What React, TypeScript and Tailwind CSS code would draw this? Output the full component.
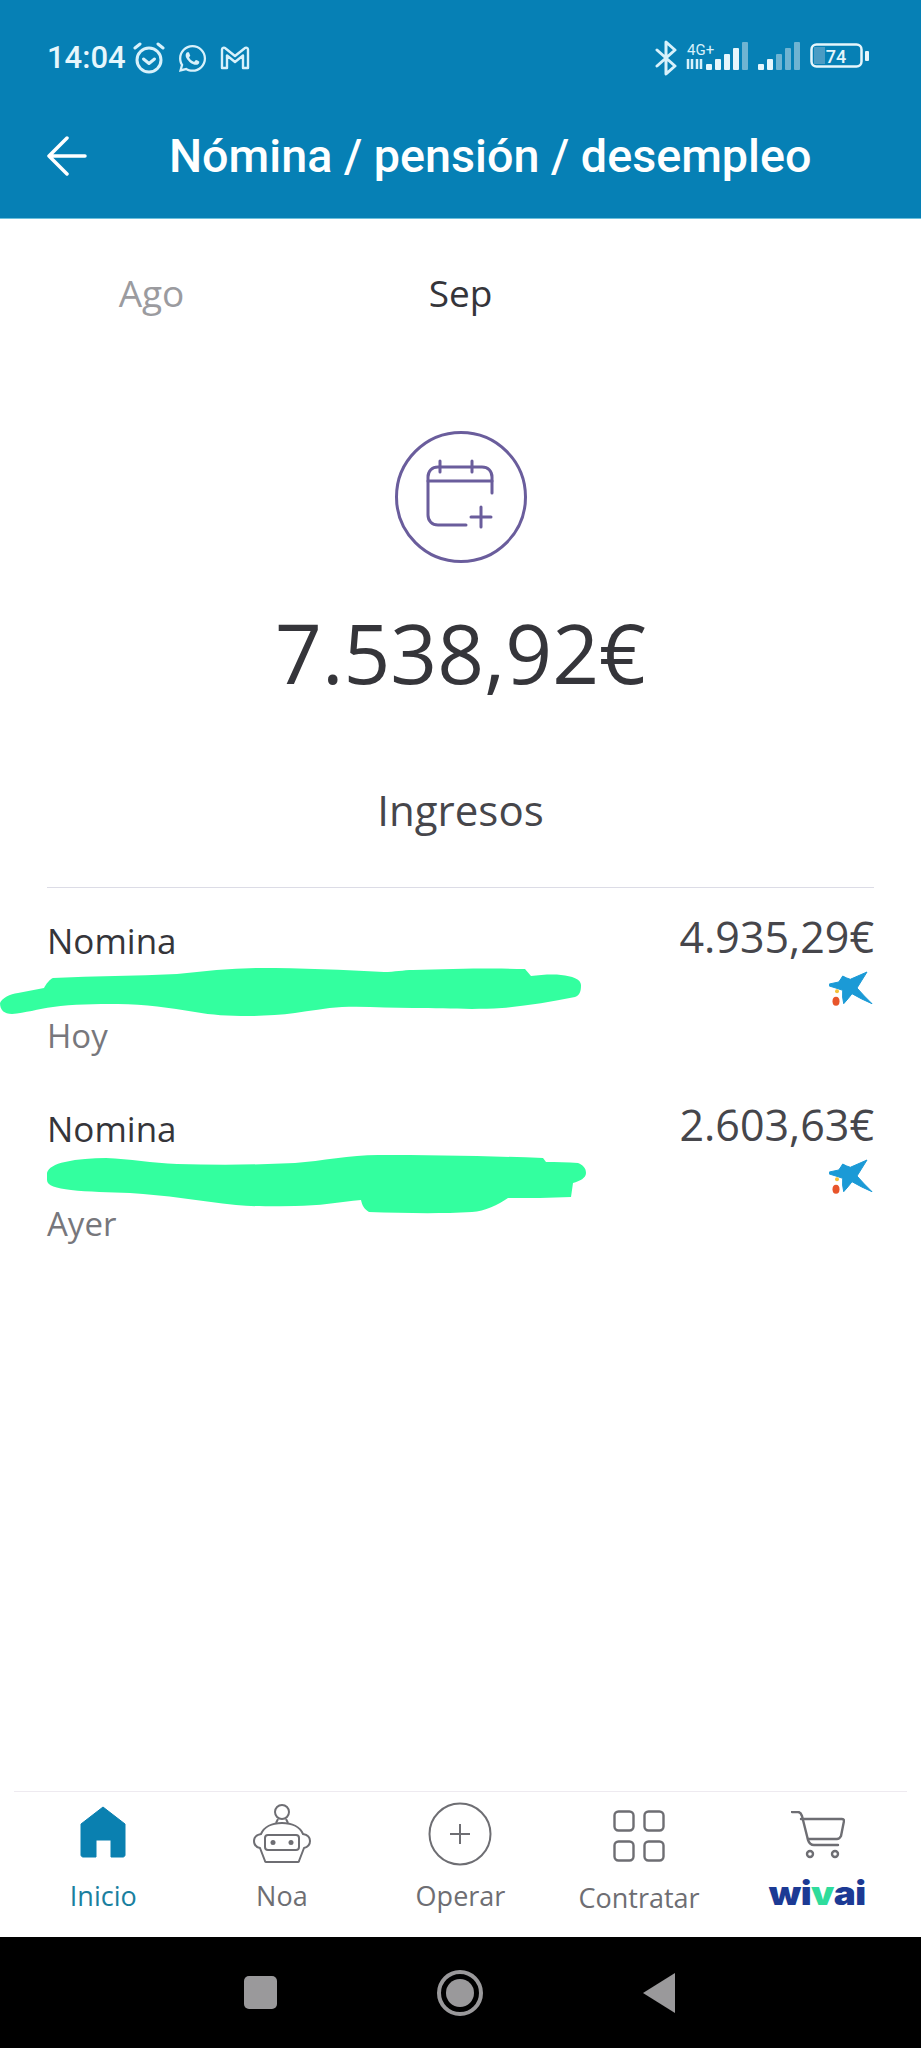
import type { ReactNode } from 'react';
import { FaWhatsapp } from 'react-icons/fa';

function AlarmIcon() {
  return (
    <svg width="34" height="32" viewBox="0 0 34 32" fill="none" stroke="#d8f1fb" strokeWidth="3" strokeLinecap="round" strokeLinejoin="round">
      <circle cx="17" cy="18" r="12" />
      <path d="M11.5 17l5.5 4.5 5.5-4.5" />
      <path d="M3 6l5-4M31 6l-5-4" />
    </svg>
  );
}

function GmailIcon() {
  return (
    <svg width="30" height="24" viewBox="0 0 30 24" fill="none" stroke="#d8f1fb" strokeWidth="2.4" strokeLinejoin="round">
      <path d="M2 3.5C2 1.8 4 1 5.3 2.2L15 10l9.7-7.8C26 1 28 1.800 28 3.500V22h-5V9.500L15 16 7 9.500V22H2z" />
    </svg>
  );
}

function StatusRight() {
  return (
    <svg width="216" height="36" viewBox="0 0 216 36" fill="none">
      {/* bluetooth */}
      <path d="M3 10l18 16-9 8V2l9 8L3 26" stroke="#d8f1fb" strokeWidth="3" strokeLinejoin="round" strokeLinecap="round" />
      {/* 4G+ */}
      <text x="33" y="15" fontFamily="Roboto, sans-serif" fontSize="15" fill="#d8f1fb">4G+</text>
      <path d="M34 19v10M38 19v10M43 19v10M47 19v10" stroke="#d8f1fb" strokeWidth="2.500" />
      {/* first signal */}
      <rect x="52" y="24" width="6" height="6" rx="1" fill="#e6f6fc" />
      <rect x="61" y="19" width="6" height="11" rx="1" fill="#e6f6fc" />
      <rect x="70" y="14" width="6" height="16" rx="1" fill="#e6f6fc" />
      <rect x="79" y="8" width="6" height="22" rx="1" fill="#e6f6fc" />
      <rect x="88" y="2" width="6" height="28" rx="1" fill="#6fb4d2" />
      {/* second signal */}
      <rect x="104" y="24" width="6" height="6" rx="1" fill="#e6f6fc" />
      <rect x="113" y="19" width="6" height="11" rx="1" fill="#e6f6fc" />
      <rect x="122" y="14" width="6" height="16" rx="1" fill="#6fb4d2" />
      <rect x="131" y="8" width="6" height="22" rx="1" fill="#6fb4d2" />
      <rect x="140" y="2" width="6" height="28" rx="1" fill="#6fb4d2" />
      {/* battery */}
      <rect x="160" y="7" width="11" height="17" fill="#4a9cc4" />
      <rect x="157.500" y="4.500" width="50" height="22" rx="5" stroke="#e6f6fc" strokeWidth="2.500" />
      <text x="182" y="23" textAnchor="middle" fontFamily="Roboto, sans-serif" fontWeight="500" fontSize="18" fill="#e6f6fc">74</text>
      <rect x="211" y="11" width="4" height="10" rx="1" fill="#e6f6fc" />
    </svg>
  );
}

function CalendarPlus() {
  return (
    <svg width="132" height="132" viewBox="0 0 132 132" fill="none" stroke="#6a5d9c" strokeWidth="3" strokeLinecap="round">
      <circle cx="66" cy="66" r="64.500" />
      <path d="M97 62V46c0-6-4-10-10-10H43c-6 0-10 4-10 10v38c0 6 4 10 10 10h28" />
      <path d="M33 50h64M45 30v11M77 30v11" />
      <path d="M76 86h20M86 76v20" />
    </svg>
  );
}

function CaixaStar() {
  return (
    <svg width="44" height="38" viewBox="0 0 44 38" className="mr-[1px]">
      <path d="M0.300 14L9.700 12Q12 9 13.700 6Q17 8 21.300 9.300L38 2Q33 10 28 18Q35 26 43 33.700Q32 29 23 23.700Q19 29 14.700 33.700Q13 27 13.700 20.300Q7 18 0.300 16Z" fill="#1b9ad6" stroke="#1b9ad6" strokeWidth="1" strokeLinejoin="round" />
      <circle cx="8" cy="21.300" r="2" fill="#f4c23a" />
      <ellipse cx="7" cy="31.300" rx="3.500" ry="4.500" fill="#e8552b" />
    </svg>
  );
}

function BlobOne() {
  return (
    <svg className="absolute left-0 top-[968px]" width="582" height="48" viewBox="0 968 582 48">
      <path d="M0 1003C2 998 10 994 18 993L44 988C46 984 50 979 53 978C95 976 135 976 177 974C205 971 232 968 260 968C300 968 345 970 384 972C395 972 403 970 413 970C450 969 490 968 525 969L531 976C540 975 552 974 561 975C572 976 581 979 581 985C581 991 580 995 575 997C550 1002 525 1006 502 1008C470 1010 445 1008 413 1008C390 1008 365 1006 342 1007C325 1008 310 1011 295 1013C280 1015 262 1016 248 1016C228 1016 212 1015 195 1012C170 1008 145 1004 118 1004C95 1004 73 1004 53 1007C38 1009 25 1013 12 1014C4 1014 0 1010 0 1003Z" fill="#33ff9f" />
    </svg>
  );
}

function BlobTwo() {
  return (
    <svg className="absolute left-[46px] top-[1154px]" width="542" height="60" viewBox="46 1154 542 60">
      <path d="M47 1173C48 1168 55 1164 65 1162C78 1159 92 1158 106 1158C130 1159 152 1163 177 1164C215 1165 255 1165 295 1163C322 1161 350 1155 378 1155C430 1155 490 1156 543 1158L546 1162C556 1162 568 1162 578 1163C583 1165 586 1168 586 1173C586 1178 580 1181 573 1183L571 1197C550 1198 530 1198 508 1198C498 1205 485 1211 472 1212C437 1214 402 1213 369 1212C364 1209 362 1205 361 1200C340 1202 318 1206 295 1206C275 1206 255 1207 236 1205C200 1201 165 1195 130 1193C110 1192 88 1192 71 1190C56 1188 47 1186 47 1180Z" fill="#33ff9f" />
    </svg>
  );
}

function IngresoRow({ date, amount }: { date: string; amount: string }) {
  return (
    <div className="flex h-[188px] justify-between">
      <div>
        <p className="text-[35px] leading-[46px] text-[#35353a]">Nomina</p>
        <p className="mt-[50px] text-[33px] leading-[44px] text-[#77777c]">{date}</p>
      </div>
      <div className="-mt-[6px] flex flex-col items-end">
        <p className="text-[43px] leading-[50px] text-[#46464b]">{amount}</p>
        <div className="mt-[8px]">
          <CaixaStar />
        </div>
      </div>
    </div>
  );
}

function HomeIcon() {
  return (
    <svg width="46" height="52" viewBox="0 0 46 52">
      <path d="M23 1L45 18V49c0 1-1 2-2 2H31V34H16V51H3c-1 0-2-1-2-2V18z" fill="#0a80b0" stroke="#0a80b0" strokeLinejoin="round" />
    </svg>
  );
}

function RobotIcon() {
  return (
    <svg width="60" height="60" viewBox="0 0 60 60" fill="none" stroke="#6e6e73" strokeWidth="2">
      <circle cx="30" cy="8" r="7" />
      <path d="M26 15l-2 4M34 15l2 4" />
      <path d="M9 30C12 23 20 19 30 19s18 4 21 11c5 1 7 4 7 7 0 4-2 6-6 7l-5 13c0 1-1 1-2 1H15c-1 0-2 0-2-1L8 44c-4-1-6-3-6-7 0-3 2-6 7-7z" strokeLinejoin="round" />
      <rect x="13" y="31" width="34" height="15" rx="3" />
      <circle cx="21" cy="38.500" r="2.500" fill="#6e6e73" stroke="none" />
      <circle cx="39" cy="38.500" r="2.500" fill="#6e6e73" stroke="none" />
    </svg>
  );
}

function PlusCircle() {
  return (
    <svg width="64" height="64" viewBox="0 0 64 64" fill="none" stroke="#6e6e73" strokeWidth="2">
      <circle cx="32" cy="32" r="30.500" />
      <path d="M22 32h20M32 22v20" />
    </svg>
  );
}

function GridIcon() {
  return (
    <svg width="52" height="52" viewBox="0 0 52 52" fill="none" stroke="#6e6e73" strokeWidth="2.400">
      <rect x="1.500" y="1.500" width="19" height="19" rx="4" />
      <rect x="31.500" y="1.500" width="19" height="19" rx="4" />
      <rect x="1.500" y="31.500" width="19" height="19" rx="4" />
      <rect x="31.500" y="31.500" width="19" height="19" rx="4" />
    </svg>
  );
}

function CartIcon() {
  return (
    <svg width="54" height="48" viewBox="0 0 54 48" fill="none" stroke="#6e6e73" strokeWidth="2.400" strokeLinejoin="round" strokeLinecap="round">
      <path d="M1 1h6c2 0 3 1 4 4l6 24c1 3 3 5 6 5h24" />
      <path d="M10 8h41c1 0 2 1 2 2l-3 15c-1 2-2 3-4 3H17" />
      <circle cx="19" cy="43" r="3" />
      <circle cx="44" cy="43" r="3" />
    </svg>
  );
}

function NavItem({ icon, label, active, iconClass, labelClass }: { icon: ReactNode; label: string; active?: boolean; iconClass: string; labelClass?: string }) {
  return (
    <div className="flex flex-col items-center">
      <div className={`flex h-[72px] items-center ${iconClass}`}>{icon}</div>
      <span className={`mt-[6px] text-[27px] leading-[36px] ${labelClass ?? ''} ${active ? 'text-[#1a7f9f]' : 'text-[#6e6e73]'}`}>{label}</span>
    </div>
  );
}

export default function App() {
  return (
    <div className="relative flex h-[2048px] w-[921px] flex-col bg-white font-['Open_Sans',sans-serif]">
      {/* Cabecera */}
      <header className="h-[219px] shrink-0 border-b border-[#6cc0dc] bg-[#0680b5] px-[47px] pt-[38px] font-['Roboto',sans-serif] text-white">
        <div className="flex h-[40px] items-center justify-between">
          <div className="flex items-center">
            <span className="text-[31px] font-medium text-[#e6f6fc]">14:04</span>
            <span className="ml-[6px]"><AlarmIcon /></span>
            <FaWhatsapp className="ml-[11px] text-[31px] text-[#d8f1fb]" />
            <span className="ml-[12px]"><GmailIcon /></span>
          </div>
          <div className="mr-[4px]">
            <StatusRight />
          </div>
        </div>
        <div className="mt-[50px] flex items-center">
          <svg width="40" height="40" viewBox="0 0 40 40" fill="none" stroke="#fff" strokeWidth="3.500" strokeLinecap="round" strokeLinejoin="round">
            <path d="M38 20H3M20 2L2 20l18 18" />
          </svg>
          <h1 className="ml-[82px] whitespace-nowrap text-[46.700px] font-medium leading-[56px]">Nómina / pensión / desempleo</h1>
        </div>
      </header>

      {/* Meses */}
      <div className="mt-[49px] grid grid-cols-3 text-center text-[37px] leading-[50px]">
        <span className="pr-[4px] text-[#9b9b9f]">Ago</span>
        <span className="text-[#35353a]">Sep</span>
      </div>

      <div className="mt-[113px] flex flex-col items-center">
        <CalendarPlus />
        <p className="mt-[32px] text-[82px] leading-[114px] text-[#35353a]">7.538,92€</p>
        <p className="mt-[73px] text-[42px] leading-[56px] text-[#46464b]">Ingresos</p>
      </div>

      {/* Movimientos */}
      <div className="mx-[47px] mt-[49px] border-t border-[#dcdce6] pt-[30px]">
        <IngresoRow date="Hoy" amount="4.935,29€" />
        <IngresoRow date="Ayer" amount="2.603,63€" />
      </div>
      <BlobOne />
      <BlobTwo />

      {/* Navegación */}
      <nav className="mx-[14px] mt-auto grid h-[146px] shrink-0 grid-cols-5 border-t border-[#eeeaf0] pt-[8px]">
        <NavItem icon={<HomeIcon />} label="Inicio" active iconClass="pb-[8px]" />
        <NavItem icon={<RobotIcon />} label="Noa" iconClass="pb-[5px]" />
        <NavItem icon={<PlusCircle />} label="Operar" iconClass="pb-[5px]" />
        <NavItem icon={<GridIcon />} label="Contratar" iconClass="" labelClass="translate-y-[2px]" />
        <div className="flex flex-col items-center">
          <div className="flex h-[72px] items-center pb-[2px]"><CartIcon /></div>
          <span className="mt-[3px] flex scale-x-[1.12] text-[33px] font-black leading-[36px] tracking-[-0.5px] text-[#1c3a94] font-['Inter',sans-serif]">
            wi<span className="text-[#2fdc9c]">v</span>ai
          </span>
        </div>
      </nav>

      {/* Barra del sistema */}
      <div className="flex h-[111px] shrink-0 items-center bg-black">
        <div className="ml-[244px] h-[33px] w-[33px] rounded-[5px] bg-[#9a999b]" />
        <div className="ml-[160px] flex h-[46px] w-[46px] items-center justify-center rounded-full border-[4px] border-[#9a999b]">
          <div className="h-[28px] w-[28px] rounded-full bg-[#9a999b]" />
        </div>
        <svg className="ml-[160px]" width="32" height="40" viewBox="0 0 32 40">
          <path d="M32 0v40L0 20z" fill="#9a999b" />
        </svg>
      </div>
    </div>
  );
}
